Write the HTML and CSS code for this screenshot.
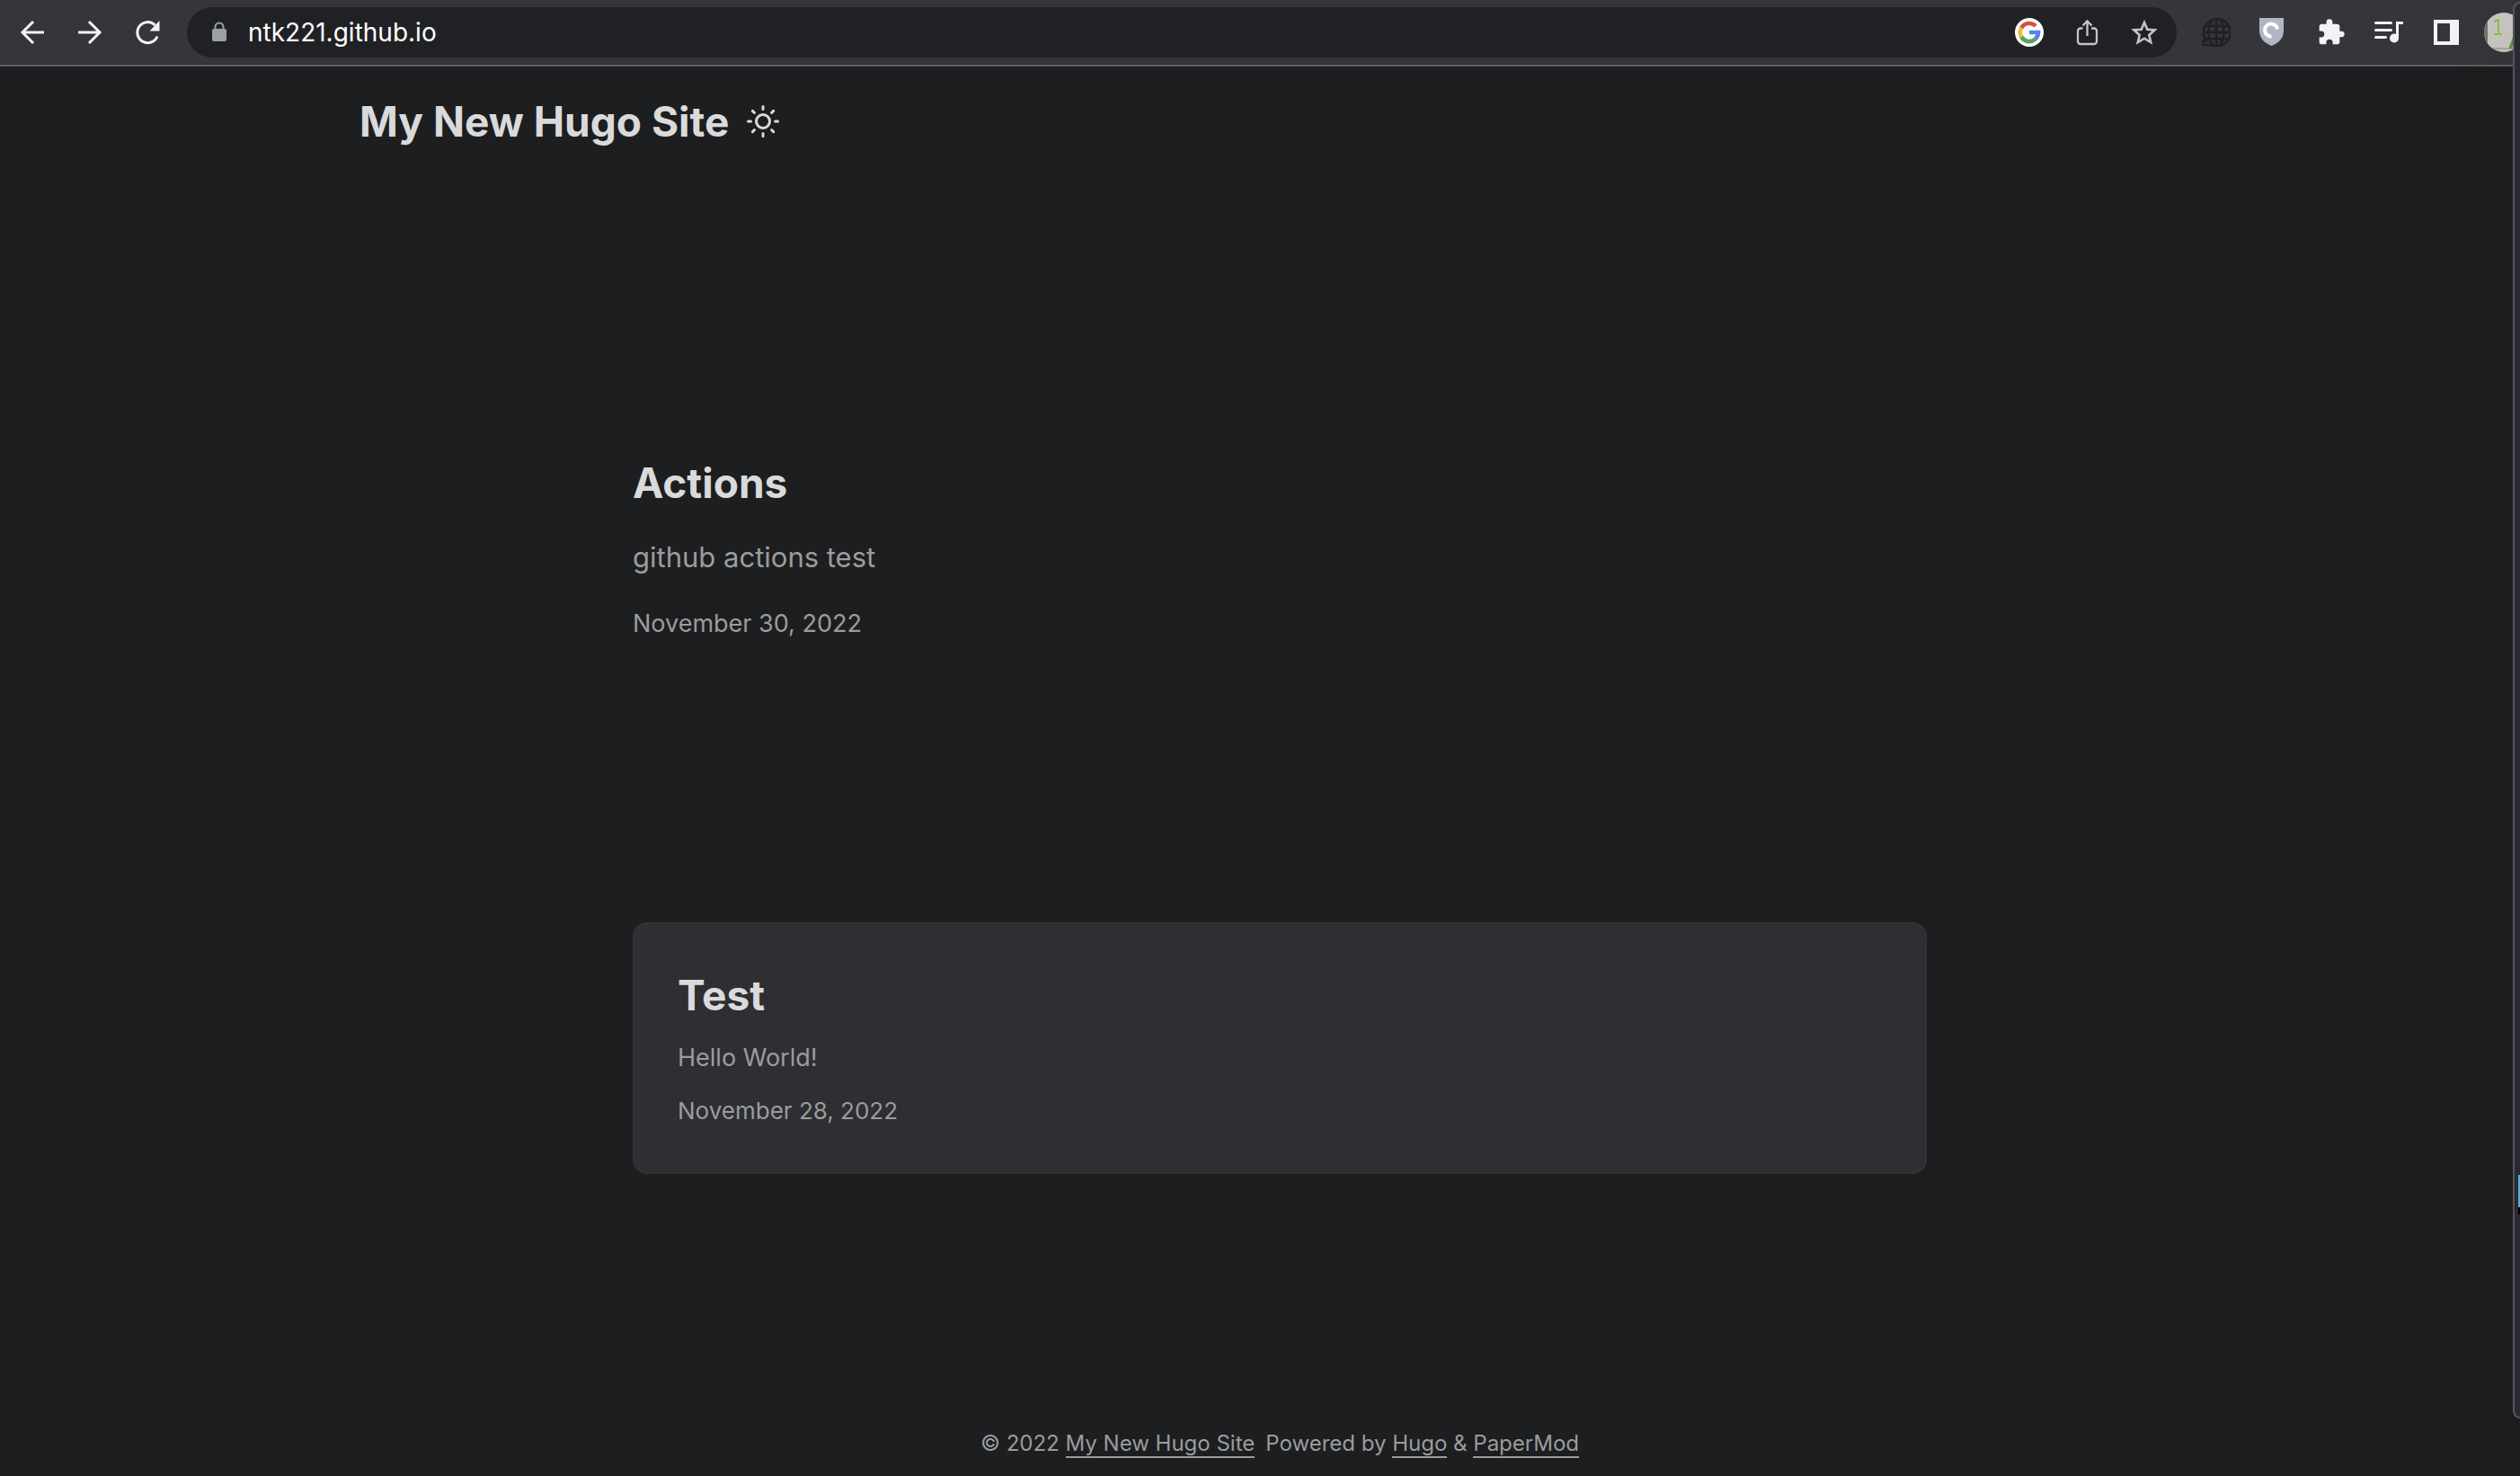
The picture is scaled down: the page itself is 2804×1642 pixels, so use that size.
FILE: index.html
```html
<!DOCTYPE html>
<html lang="en">
<head>
<meta charset="utf-8">
<title>My New Hugo Site</title>
<link rel="stylesheet" href="styles.css">
</head>
<body>
<div class="toolbar">
  <button class="tool" aria-label="Back"><svg width="32" height="32" viewBox="0 0 32 32" fill="none" stroke="#f1f3f4" stroke-width="3"><path d="M29 16H5M17 4L5 16l12 12"/></svg></button>
  <button class="tool" aria-label="Forward"><svg width="32" height="32" viewBox="0 0 32 32" fill="none" stroke="#f1f3f4" stroke-width="3"><path d="M3 16h24M15 4l12 12-12 12"/></svg></button>
  <button class="tool" aria-label="Reload"><svg width="32" height="32" viewBox="0 0 32 32"><path d="M24.500 8A11.500 11.500 0 1 0 27 20.500" fill="none" stroke="#f1f3f4" stroke-width="3"/><path d="M29.500 3v11.500H18.500z" fill="#f1f3f4"/></svg></button>
  <div class="omnibox">
    <button class="tool" aria-label="Site information"><svg width="20" height="24" viewBox="0 0 20 24"><rect x="2" y="8" width="16" height="14" rx="2" fill="#9aa0a6"/><path d="M5.500 9V6a4.500 4.500 0 0 1 9 0v3" fill="none" stroke="#9aa0a6" stroke-width="2"/></svg></button>
    <input class="address" type="text" aria-label="Address" value="ntk221.github.io">
    <button class="tool" aria-label="Google"><svg width="32" height="32" viewBox="0 0 32 32"><circle cx="16" cy="16" r="16" fill="#fff"/><g fill="none" stroke-width="4.600"><path d="M7.200 11A10 10 0 0 1 23 9" stroke="#d8503f"/><path d="M7.200 21A10 10 0 0 1 7.200 11" stroke="#f0bd42"/><path d="M22.600 23.500A10 10 0 0 1 7.200 21" stroke="#58a55c"/><path d="M16 16h10a10 10 0 0 1-3.400 7.500" stroke="#5383ec"/></g></svg></button>
    <button class="tool" aria-label="Share"><svg width="32" height="32" viewBox="0 0 32 32" fill="none" stroke="#c4c4c5" stroke-width="2.300"><path d="M11.500 11.500H9a3 3 0 0 0-3 3V26a3 3 0 0 0 3 3h15a3 3 0 0 0 3-3V14.500a3 3 0 0 0-3-3h-3M16.500 20V3.500M11.500 8.500l5-5 5 5"/></svg></button>
    <button class="tool" aria-label="Bookmark"><svg width="32" height="32" viewBox="0 0 32 32" fill="none" stroke="#c4c4c5" stroke-width="2.600"><path d="M16 5l3.300 7.700 8.300.700-6.300 5.500 1.900 8.100L16 22.700 8.800 27l1.900-8.100-6.300-5.500 8.300-.700z"/></svg></button>
  </div>
  <div class="extensions">
    <button class="tool" aria-label="Translate"><svg width="32" height="32" viewBox="0 0 32 32" fill="none" stroke="#1f2022" stroke-width="2.500"><path d="M5.500 26A15 15 0 1 1 11 30H1.500v-4.500l4 .5M16 1v29M1 16h30M3 9h26M3 23h26M12 1.500c-6 8-6 21 0 28M20 1.500c6 8 6 21 0 28"/></svg></button>
    <button class="tool" aria-label="Shield"><svg width="32" height="32" viewBox="0 0 32 32"><path d="M0 0h27v14c0 9-6 14-13.500 17C6 28 0 23 0 14z" fill="#b2b5c2"/><path d="M20 12.500A7 7 0 1 0 13.500 20.500" fill="none" stroke="#fff" stroke-width="4"/></svg></button>
    <button class="tool" aria-label="Extensions"><svg width="32" height="32" viewBox="0 0 24 24"><path d="M20.500 11H19V7c0-1.100-.9-2-2-2h-4V3.500a2.500 2.500 0 0 0-5 0V5H4c-1.100 0-2 .9-2 2v3.800h1.500a2.700 2.700 0 0 1 0 5.400H2V20c0 1.100.9 2 2 2h3.800v-1.500a2.700 2.700 0 0 1 5.400 0V22H17c1.100 0 2-.9 2-2v-4h1.500a2.500 2.500 0 0 0 0-5z" fill="#f1f3f4"/></svg></button>
    <button class="tool" aria-label="Media"><svg width="32" height="32" viewBox="0 0 32 32" fill="none" stroke="#f1f3f4" stroke-width="3" stroke-linecap="round"><path d="M1.500 5.500h17M1.500 13.500h17M1.500 21.500h11"/><path d="M25.500 22V5.500h5.500"/><circle cx="22" cy="22.500" r="5" fill="#f1f3f4" stroke="none"/></svg></button>
    <button class="tool" aria-label="Side panel"><svg width="28" height="28" viewBox="0 0 28 28"><path d="M0 0h28v28H0zM4 4v20h14V4z" fill="#f1f3f4" fill-rule="evenodd"/></svg></button>
    <button class="tool" aria-label="Profile"><svg width="44" height="44" viewBox="0 0 44 44"><defs><clipPath id="face"><circle cx="22" cy="22" r="22"/></clipPath></defs><g clip-path="url(#face)"><path d="M0 0h44v44H0z" fill="#c9c6c3"/><path d="M0 0h4v44H0z" fill="#77716e"/><path d="M4 40h40" stroke="#8b8782" stroke-width="1"/><path d="M29 40l5-14" stroke="#55913a" stroke-width="3"/></g><path d="M11 10l5-2v16M11 24h9" fill="none" stroke="#8cc04a" stroke-width="2"/></svg></button>
  </div>
</div>
<div class="page">
  <header class="nav">
    <a class="logo" href="#">My New Hugo Site</a>
    <button class="theme" aria-label="Toggle theme"><svg width="36" height="36" viewBox="0 0 24 24" fill="none" stroke="#dadadb" stroke-width="2" stroke-linecap="round"><circle cx="12" cy="12" r="5"/><path d="M12 1v2M12 21v2M4.220 4.220l1.420 1.420M18.360 18.360l1.420 1.420M1 12h2M21 12h2M4.220 19.780l1.420-1.420M18.360 5.640l1.420-1.420"/></svg></button>
  </header>
  <main class="main">
    <article class="first-entry">
      <h2 class="title">Actions</h2>
      <p class="lead">github actions test</p>
      <footer class="lead-date">November 30, 2022</footer>
    </article>
    <article class="post-entry">
      <h2 class="title">Test</h2>
      <p class="summary">Hello World!</p>
      <footer class="date">November 28, 2022</footer>
    </article>
  </main>
  <footer class="footer">
    <span>© 2022 <a href="#">My New Hugo Site</a></span>
    <span>Powered by <a href="#">Hugo</a> &amp; <a href="#">PaperMod</a></span>
  </footer>
</div>
<aside class="side-window"><div class="thumb"></div></aside>
</body>
</html>
```
FILE: styles.css
```css
* { box-sizing: border-box; }
body {
  margin: 0;
  min-height: 100vh;
  display: flex;
  flex-direction: column;
  overflow: hidden;
  position: relative;
  background: #1d1e20;
  color: #dadadb;
  font-family: Inter, "Liberation Sans", sans-serif;
}
h2, p { margin: 0; }
a { color: inherit; text-decoration: none; }
button { border: 0; padding: 0; background: none; }
svg { display: block; }

.toolbar {
  display: flex;
  align-items: center;
  gap: 12px;
  height: 74px;
  padding-left: 4px;
  background: #35363a;
  border-bottom: 2px solid #5f6063;
}
.tool {
  flex: none;
  display: flex;
  align-items: center;
  justify-content: center;
  width: 64px;
  height: 56px;
}
.toolbar > .tool + .tool { margin-left: -12px; }
.omnibox {
  flex: 1;
  display: flex;
  align-items: center;
  height: 56px;
  padding: 0 4px;
  border-radius: 28px;
  background: #202124;
}
.address {
  flex: 1;
  min-width: 0;
  border: 0;
  padding: 0;
  background: none;
  color: #fff;
  font: 28px/36px Inter, "Liberation Sans", sans-serif;
}
.extensions {
  display: flex;
  margin-right: -14px;
}

.page {
  flex: 1;
  display: flex;
  flex-direction: column;
  padding-left: 44px;
}
.nav {
  width: 100%;
  max-width: 2144px;
  margin: 0 auto;
  padding: 2px 48px 0;
  height: 120px;
  display: flex;
  align-items: center;
  gap: 20px;
}
.logo { font-size: 46px; font-weight: 700; line-height: 60px; }
.main {
  flex: 1;
  width: 100%;
  max-width: 1536px;
  margin: 0 auto;
  padding: 48px;
}
.first-entry {
  display: flex;
  flex-direction: column;
  justify-content: center;
  min-height: 640px;
  margin: 48px 0 96px;
}
.title { font-size: 46px; font-weight: 700; line-height: 62px; }
.lead, .lead-date, .summary, .date { color: #9b9c9d; }
.lead { margin: 26px 0 28px; font-size: 31px; line-height: 52px; }
.lead-date { font-size: 27px; line-height: 40px; }
.post-entry {
  padding: 48px;
  border: 2px solid #333333;
  border-radius: 16px;
  background: #2e2e33;
}
.summary { margin: 18px 0; font-size: 27px; line-height: 42px; }
.date { font-size: 26px; line-height: 40px; }
.footer {
  display: flex;
  justify-content: center;
  align-items: center;
  gap: 12px;
  height: 72px;
  padding: 0 48px;
  color: #9b9c9d;
  font-size: 24px;
  line-height: 28px;
}
.footer a { border-bottom: 2px solid #9b9c9d; }

.side-window {
  position: absolute;
  top: 2px;
  right: 0;
  width: 8px;
  height: 1576px;
  padding-top: 1303px;
  border: 2px solid #545458;
  border-right: 0;
  border-radius: 16px 0 0 16px;
  background: #2a2a32;
  box-shadow: 0 0 70px rgba(0, 0, 0, .3);
}
.thumb {
  width: 2px;
  height: 44px;
  margin-left: auto;
  border-bottom: 8px solid #000;
  background: #63a9d6;
}
```
